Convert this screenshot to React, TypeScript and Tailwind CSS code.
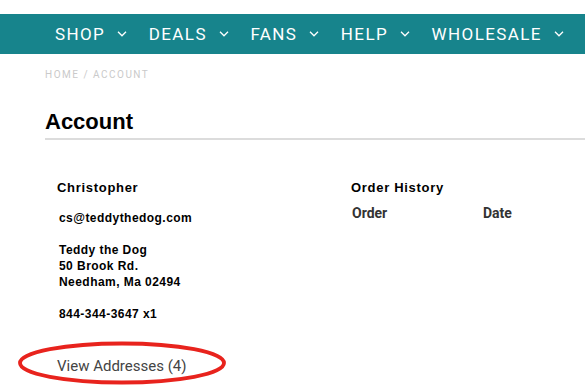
import React from "react";

const Chevron = () => (
  <svg width="10" height="6" viewBox="0 0 10 6" fill="none" className="ml-[12px]">
    <path d="M1 0.8 L5 4.8 L9 0.8" stroke="white" strokeWidth="1.3" />
  </svg>
);

const navItems = ["SHOP", "DEALS", "FANS", "HELP", "WHOLESALE"];

export default function App() {
  return (
    <div className="w-[585px] h-[385px] overflow-hidden bg-white relative">
      <div className="h-[14px]" />
      <nav className="h-[40px] bg-[#17848c] flex items-center pl-[55px] gap-[21.5px]">
        {navItems.map((n) => (
          <div key={n} className="flex items-center">
            <span
              className="text-white text-[17px] tracking-[1.4px] leading-none"
              style={{ fontFamily: "Roboto, sans-serif" }}
            >
              {n}
            </span>
            <Chevron />
          </div>
        ))}
      </nav>
      <div className="pl-[45px]">
        <div
          className="mt-[15px] text-[10px] leading-[12px] tracking-[1.5px] text-[#cacaca]"
          style={{ fontFamily: "Roboto, sans-serif" }}
        >
          HOME / ACCOUNT
        </div>
        <h1
          className="mt-[28px] text-[22px] leading-[26px] font-bold text-black"
          style={{ fontFamily: '"Liberation Sans", Arial, sans-serif' }}
        >
          Account
        </h1>
        <div className="mt-[3px] h-[2px] bg-[#dcdcdc]" />
        <div className="grid grid-cols-[294px_1fr] mt-[40px]">
          <div
            className="pl-[12px] text-black"
            style={{ fontFamily: '"Liberation Sans", Arial, sans-serif' }}
          >
            <div className="text-[13px] leading-[16px] font-bold tracking-[0.7px]">Christopher</div>
            <div className="pl-[2px] mt-[14px] text-[12px] leading-[16px] font-bold tracking-[0.45px]">
              <p>cs@teddythedog.com</p>
              <p className="mt-[16px]">Teddy the Dog</p>
              <p>50 Brook Rd.</p>
              <p>Needham, Ma 02494</p>
              <p className="mt-[16px]">844-344-3647 x1</p>
            </div>
            <div
              className="mt-[35px] text-[15px] leading-[18px] text-[#444]"
              style={{ fontFamily: "Roboto, sans-serif" }}
            >
              View Addresses (4)
            </div>
          </div>
          <div className="pl-[12px]">
            <div
              className="text-[13px] leading-[16px] font-bold tracking-[0.7px] text-black"
              style={{ fontFamily: '"Liberation Sans", Arial, sans-serif' }}
            >
              Order History
            </div>
            <div
              className="mt-[9px] flex text-[14px] leading-[16px] font-bold text-[#333]"
              style={{ fontFamily: "Roboto, sans-serif" }}
            >
              <div className="w-[132px] pl-[1px]">Order</div>
              <div>Date</div>
            </div>
          </div>
        </div>
      </div>
      <svg
        className="absolute left-[17px] top-[341px]"
        width="212"
        height="44"
        viewBox="0 0 212 44"
        fill="none"
      >
        <ellipse cx="105" cy="22" rx="102" ry="19.5" stroke="#e8231d" strokeWidth="3.8" />
      </svg>
    </div>
  );
}
